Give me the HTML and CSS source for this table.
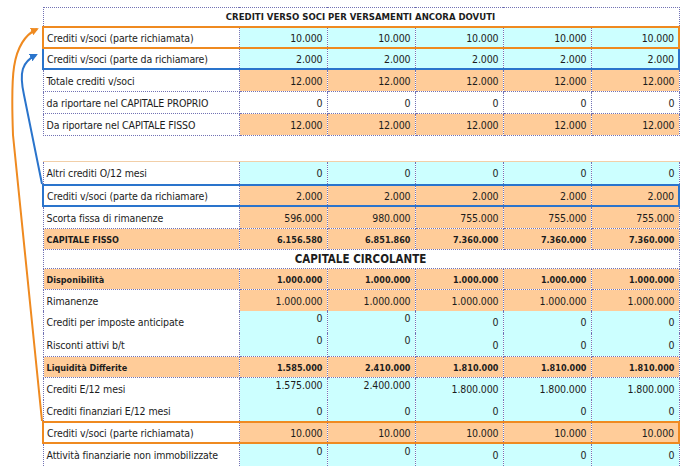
FILE: index.html
```html
<!DOCTYPE html>
<html>
<head>
<meta charset="utf-8">
<link rel="stylesheet" href="styles.css">
</head>
<body>
<div class="page">
<table class="sheet">
<colgroup><col class="c0"><col class="cv"><col class="cv"><col class="cv"><col class="cv"><col class="cv"></colgroup>
<tr class="head"><td colspan="6">CREDITI VERSO SOCI PER VERSAMENTI ANCORA DOVUTI</td></tr>
<tr class="box-o"><td class="lab">Crediti v/soci (parte richiamata)</td><td class="cy">10.000</td><td class="cy">10.000</td><td class="cy">10.000</td><td class="cy">10.000</td><td class="cy">10.000</td></tr>
<tr class="box-b"><td class="lab">Crediti v/soci (parte da richiamare)</td><td class="cy">2.000</td><td class="cy">2.000</td><td class="cy">2.000</td><td class="cy">2.000</td><td class="cy">2.000</td></tr>
<tr><td class="lab">Totale crediti v/soci</td><td class="pe">12.000</td><td class="pe">12.000</td><td class="pe">12.000</td><td class="pe">12.000</td><td class="pe">12.000</td></tr>
<tr><td class="lab">da riportare nel CAPITALE PROPRIO</td><td>0</td><td>0</td><td>0</td><td>0</td><td>0</td></tr>
<tr><td class="lab">Da riportare nel CAPITALE FISSO</td><td class="pe">12.000</td><td class="pe">12.000</td><td class="pe">12.000</td><td class="pe">12.000</td><td class="pe">12.000</td></tr>
</table>

<div class="gap"></div>

<table class="sheet second">
<colgroup><col class="c0"><col class="cv"><col class="cv"><col class="cv"><col class="cv"><col class="cv"></colgroup>
<tr class="first"><td class="lab">Altri crediti O/12 mesi</td><td class="cy">0</td><td class="cy">0</td><td class="cy">0</td><td class="cy">0</td><td class="cy">0</td></tr>
<tr class="box-b"><td class="lab">Crediti v/soci (parte da richiamare)</td><td class="pe">2.000</td><td class="pe">2.000</td><td class="pe">2.000</td><td class="pe">2.000</td><td class="pe">2.000</td></tr>
<tr><td class="lab">Scorta fissa di rimanenze</td><td class="pe">596.000</td><td class="pe">980.000</td><td class="pe">755.000</td><td class="pe">755.000</td><td class="pe">755.000</td></tr>
<tr class="bold"><td class="lab pe">CAPITALE FISSO</td><td class="pe">6.156.580</td><td class="pe">6.851.860</td><td class="pe">7.360.000</td><td class="pe">7.360.000</td><td class="pe">7.360.000</td></tr>
<tr class="title"><td colspan="6">CAPITALE CIRCOLANTE</td></tr>
<tr class="bold"><td class="lab pe">Disponibilità</td><td class="pe">1.000.000</td><td class="pe">1.000.000</td><td class="pe">1.000.000</td><td class="pe">1.000.000</td><td class="pe">1.000.000</td></tr>
<tr class="nb"><td class="lab">Rimanenze</td><td class="pe">1.000.000</td><td class="pe">1.000.000</td><td class="pe">1.000.000</td><td class="pe">1.000.000</td><td class="pe">1.000.000</td></tr>
<tr class="nb"><td class="lab">Crediti per imposte anticipate</td><td class="cy top">0</td><td class="cy top">0</td><td class="cy">0</td><td class="cy">0</td><td class="cy">0</td></tr>
<tr class="tall"><td class="lab">Risconti attivi b/t</td><td class="cy top">0</td><td class="cy top">0</td><td class="cy">0</td><td class="cy">0</td><td class="cy">0</td></tr>
<tr class="bold"><td class="lab pe">Liquidità Differite</td><td class="pe">1.585.000</td><td class="pe">2.410.000</td><td class="pe">1.810.000</td><td class="pe">1.810.000</td><td class="pe">1.810.000</td></tr>
<tr class="nb"><td class="lab">Crediti E/12 mesi</td><td class="cy top">1.575.000</td><td class="cy top">2.400.000</td><td class="cy">1.800.000</td><td class="cy">1.800.000</td><td class="cy">1.800.000</td></tr>
<tr><td class="lab">Crediti finanziari E/12 mesi</td><td class="cy">0</td><td class="cy">0</td><td class="cy">0</td><td class="cy">0</td><td class="cy">0</td></tr>
<tr class="box-o"><td class="lab">Crediti v/soci (parte richiamata)</td><td class="pe">10.000</td><td class="pe">10.000</td><td class="pe">10.000</td><td class="pe">10.000</td><td class="pe">10.000</td></tr>
<tr class="last"><td class="lab">Attività finanziarie non immobilizzate</td><td class="cy top">0</td><td class="cy top">0</td><td class="cy">0</td><td class="cy">0</td><td class="cy">0</td></tr>
</table>
</div>

<svg class="arrows" width="688" height="475" viewBox="0 0 688 475">
  <defs>
    <marker id="ho" markerWidth="8" markerHeight="8" refX="6" refY="4" orient="auto" markerUnits="userSpaceOnUse">
      <path d="M0,0 L8,4 L0,8 Z" fill="#ef8a20"/>
    </marker>
    <marker id="hb" markerWidth="8" markerHeight="8" refX="6" refY="4" orient="auto" markerUnits="userSpaceOnUse">
      <path d="M0,0 L8,4 L0,8 Z" fill="#2a74cc"/>
    </marker>
  </defs>
  <path d="M42 421 L13 135 C11 80 10 42 37 29" fill="none" stroke="#ef8a20" stroke-width="2" marker-end="url(#ho)"/>
  <path d="M42 184 L24 95 C19 72 22 62 36 55" fill="none" stroke="#2a74cc" stroke-width="2" marker-end="url(#hb)"/>
</svg>
</body>
</html>
```

FILE: styles.css
```css
html, body {
  margin: 0;
  padding: 0;
  background: #ffffff;
}
body {
  position: relative;
  width: 688px;
  height: 475px;
  overflow: hidden;
  font-family: "DejaVu Sans Condensed", "DejaVu Sans", sans-serif;
  color: #1c1c1c;
}
.page {
  padding: 7px 0 0 42px;
}
.sheet {
  border-collapse: collapse;
  table-layout: fixed;
  width: 638px;
}
.c0 { width: 196px; }
.cv { width: 88px; }
.sheet td {
  border: 1px dotted #7272b4;
  padding: 0 4px 0 3px;
  height: 21px;
  font-size: 10.5px;
  letter-spacing: -0.12px;
  line-height: 12px;
  text-align: right;
  white-space: nowrap;
  overflow: hidden;
  vertical-align: middle;
}
.sheet td.lab {
  text-align: left;
  padding-left: 3px;
}
.cy { background: #ccffff; }
.pe { background: #ffcc99; }
.sheet td.top {
  vertical-align: top;
  padding-top: 1px;
}
.head td {
  height: 18px;
  text-align: center;
  font-weight: bold;
  font-size: 9.5px;
  letter-spacing: 0;
}
.title td {
  height: 18px;
  text-align: center;
  font-weight: bold;
  font-size: 11.5px;
  letter-spacing: 0;
}
.bold td {
  height: 19px;
  padding-top: 1px;
  font-weight: bold;
  font-size: 9px;
  letter-spacing: 0;
}
.tall td {
  height: 22px;
}
.nb td {
  border-bottom-style: hidden;
}
.first td {
  height: 22px;
  border-top: 1px solid #f2cfa8;
}
.last td {
  border-bottom-style: hidden;
}
.box-o td {
  height: 19px;
  border-top: 2px solid #ef8a20;
  border-bottom: 2px solid #ef8a20;
}
.box-o td:first-child { border-left: 2px solid #ef8a20; }
.box-o td:last-child { border-right: 2px solid #ef8a20; }
.box-b td {
  height: 18px;
  padding-top: 1px;
  border-top: 2px solid #2a74cc;
  border-bottom: 2px solid #2a74cc;
}
.box-b td:first-child { border-left: 2px solid #2a74cc; }
.box-b td:last-child { border-right: 2px solid #2a74cc; }
.gap {
  height: 25px;
}
.arrows {
  position: absolute;
  left: 0;
  top: 0;
  pointer-events: none;
}
```
